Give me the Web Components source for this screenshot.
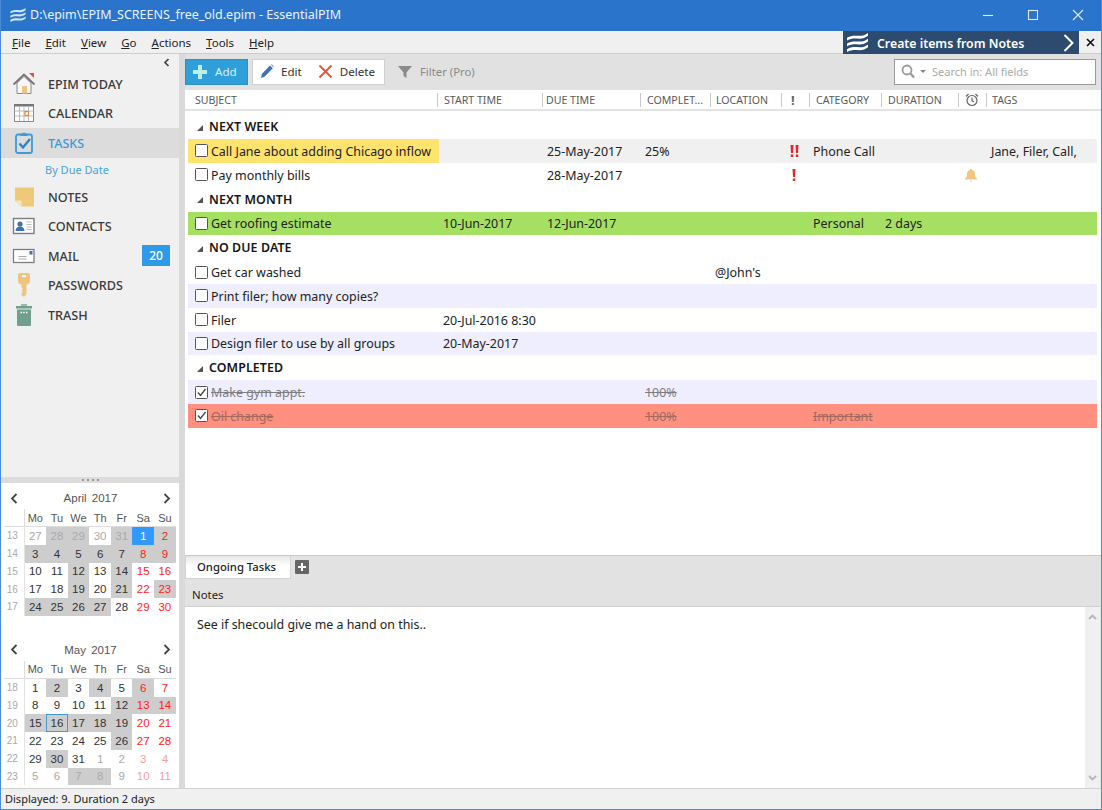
<!DOCTYPE html>
<html>
<head>
<meta charset="utf-8">
<title>EssentialPIM</title>
<style>
  html, body { margin: 0; padding: 0; height: 100%; overflow: hidden; }
  body { font-family: "Noto Sans", "Open Sans", sans-serif; font-size: 12px; color: #222; }
</style>
</head>
<body>
<epim-app></epim-app>
<script>
const WAVES = `<path d="M2 6c5-3 9-2 13-2s6-1 9-3v3c-3 2-5 3-9 3s-8-1-13 2zM2 12c5-3 9-2 13-2s6-1 9-3v3c-3 2-5 3-9 3s-8-1-13 2zM2 18c5-3 9-2 13-2s6-1 9-3v3c-3 2-5 3-9 3s-8-1-13 2z"/>`;

class TitleBar extends HTMLElement {
  constructor() { super(); this.attachShadow({ mode: 'open' }); }
  connectedCallback() {
    this.shadowRoot.innerHTML = `
      <style>
        :host { display: flex; align-items: center; height: 31px; padding-bottom: 2px; box-sizing: border-box; background: #2a75cb; color: #fff; font-size: 12.5px; }
        .logo { margin: 0 3px 0 8px; width: 18px; height: 18px; fill: #cfe3f8; }
        .title { flex: 1; color: #eaf2fb; }
        .btn { width: 45px; height: 29px; display: flex; align-items: center; justify-content: center; }
        svg.c { width: 12px; height: 12px; fill: none; stroke: #dfeafa; stroke-width: 1.1; }
      </style>
      <svg class="logo" viewBox="0 0 26 22">${WAVES}</svg>
      <div class="title">D:\\epim\\EPIM_SCREENS_free_old.epim - EssentialPIM</div>
      <div class="btn"><svg class="c" viewBox="0 0 12 12"><path d="M1 6.5h10"/></svg></div>
      <div class="btn"><svg class="c" viewBox="0 0 12 12"><rect x="1.5" y="1.5" width="9" height="9"/></svg></div>
      <div class="btn" style="margin-right:1px"><svg class="c" viewBox="0 0 12 12"><path d="M1 1l10 10M11 1L1 11"/></svg></div>`;
  }
}
customElements.define('title-bar', TitleBar);

class MenuBar extends HTMLElement {
  constructor() { super(); this.attachShadow({ mode: 'open' }); }
  connectedCallback() {
    const items = ['File', 'Edit', 'View', 'Go', 'Actions', 'Tools', 'Help'];
    this.shadowRoot.innerHTML = `
      <style>
        :host { display: flex; align-items: stretch; height: 23px; background: #f0f0f0; border-bottom: 1px solid #cdcdcd; box-sizing: border-box; font-size: 11.5px; color: #222; }
        ul { flex: 1; display: flex; gap: 15px; align-items: center; list-style: none; margin: 0; padding: 1px 0 0 11px; }
        u { text-underline-offset: 1px; }
        .banner { width: 236px; height: 23px; background: #2d4b6f; color: #fff; font-weight: 600; font-size: 12.3px; display: flex; align-items: center; box-sizing: border-box; padding: 0 5px 0 2px; }
        .banner span { flex: 1; margin-left: 7px; padding-top: 1px; }
        .banner svg { fill: #fff; width: 25px; height: 21px; }
        .banner svg.ch { fill: none; stroke: #fff; stroke-width: 2; width: 11px; height: 18px; }
        .x { width: 22px; display: flex; align-items: center; justify-content: center; }
        .x svg { width: 9px; height: 9px; stroke: #111; stroke-width: 1.6; fill: none; }
      </style>
      <ul>${items.map(m => `<li><u>${m[0]}</u>${m.slice(1)}</li>`).join('')}</ul>
      <div class="banner">
        <svg viewBox="0 0 26 22">${WAVES}</svg><span>Create items from Notes</span>
        <svg class="ch" viewBox="0 0 11 18"><path d="M1.5 1l8 8-8 8"/></svg>
      </div>
      <div class="x"><svg viewBox="0 0 9 9"><path d="M1 1l7 7M8 1L1 8"/></svg></div>`;
  }
}
customElements.define('menu-bar', MenuBar);

class NavItem extends HTMLElement {
  constructor() { super(); this.attachShadow({ mode: 'open' }); }
  connectedCallback() {
    const badge = this.getAttribute('badge');
    this.shadowRoot.innerHTML = `
      <style>
        :host { display: flex; align-items: center; height: 29.6px; padding-left: 10px; font-size: 12.6px; color: #3a3a3a; font-weight: 500; }
        :host([active]) { background: #dcdcdc; color: #3d9ad9; }
        .ic { width: 25px; height: 26px; display: flex; align-items: center; justify-content: center; margin-right: 12px; }
        .label { flex: 1; padding-top: 1px; }
        .badge { width: 28px; height: 21px; margin-right: 9px; background: #2f9be6; color: #fff; font-size: 12px; display: flex; align-items: center; justify-content: center; }
      </style>
      <div class="ic"><slot></slot></div>
      <div class="label">${this.getAttribute('label')}</div>
      ${badge ? `<div class="badge">${badge}</div>` : ''}`;
  }
}
customElements.define('nav-item', NavItem);

class MiniCalendar extends HTMLElement {
  constructor() { super(); this.attachShadow({ mode: 'open' }); }
  connectedCallback() {
    const first = +this.getAttribute('first');
    const prevLen = +this.getAttribute('prev-len');
    const len = +this.getAttribute('len');
    const rows = +this.getAttribute('rows');
    const week = +this.getAttribute('week');
    const busy = this.getAttribute('busy').split(',').map(Number);
    const sel = +this.getAttribute('selected');
    const today = +this.getAttribute('today');
    let cells = '';
    for (let i = 0; i < rows * 7; i++) {
      if (i % 7 === 0) cells += `<div class="wk">${week + i / 7}</div>`;
      let d = i - first + 1, out = false;
      if (d < 1) { d += prevLen; out = true; } else if (d > len) { d -= len; out = true; }
      const cls = [];
      if (out) cls.push('out');
      if (i % 7 >= 5) cls.push('we');
      if (busy.includes(i)) cls.push('busy');
      if (!out && d === sel) cls.push('sel');
      if (!out && d === today) cls.push('today');
      cells += `<div class="d ${cls.join(' ')}">${d}</div>`;
    }
    this.shadowRoot.innerHTML = `
      <style>
        :host { display: block; font-family: "Liberation Sans", Arial, sans-serif; font-size: 11px; color: #333; padding: 0 0 0 3px; width: 173px; }
        .head { height: 26px; display: flex; align-items: center; justify-content: space-between; padding: 4px 6px 0 6px; box-sizing: border-box; color: #555; font-size: 11.5px; word-spacing: 2px; }
        .head svg { width: 8px; height: 11px; fill: none; stroke: #444; stroke-width: 1.8; }
        .grid { display: grid; grid-template-columns: 20.5px repeat(7, 21.6px); grid-auto-rows: 17.75px; }
        .hd { height: 17px; display: flex; align-items: center; justify-content: center; color: #555; border-bottom: 1px solid #ddd; }
        .hd.blank { border-right: 1px solid #ddd; }
        .wk { display: flex; align-items: center; justify-content: center; color: #aaa; font-size: 10px; border-right: 1px solid #e3e3e3; padding-right: 3px; box-sizing: border-box; }
        .d { display: flex; align-items: center; justify-content: center; color: #333; box-sizing: border-box; font-size: 11.5px; }
        .we { color: #f22; }
        .out { color: #aaa; }
        .out.we { color: #f5a0a0; }
        .busy { background: #cdcdcd; }
        .sel { background: #3399ff; color: #fff; }
        .today { border: 1px solid #3b9bdc; }
      </style>
      <div class="head">
        <svg viewBox="0 0 8 11"><path d="M6.5 1L2 5.5 6.5 10"/></svg>
        <span>${this.getAttribute('title')}</span>
        <svg viewBox="0 0 8 11"><path d="M1.5 1L6 5.5 1.5 10"/></svg>
      </div>
      <div class="grid" style="grid-template-rows: 18px">
        <div class="hd blank"></div>
        ${['Mo','Tu','We','Th','Fr','Sa','Su'].map(h => `<div class="hd">${h}</div>`).join('')}
        ${cells}
      </div>`;
  }
}
customElements.define('mini-calendar', MiniCalendar);

class SidePanel extends HTMLElement {
  constructor() { super(); this.attachShadow({ mode: 'open' }); }
  connectedCallback() {
    this.shadowRoot.innerHTML = `
      <style>
        :host { display: flex; flex-direction: column; width: 178px; background: #f0f0f0; min-height: 0; }
        .collapse { height: 15px; box-sizing: border-box; display: flex; justify-content: flex-end; padding: 4px 9px 0 0; }
        .collapse svg { width: 7px; height: 9px; fill: none; stroke: #444; stroke-width: 1.7; }
        nav { flex: none; height: 423px; }
        .sub { height: 24px; display: flex; align-items: center; padding: 0 0 1px 44px; color: #47a3dd; font-size: 11px; box-sizing: border-box; }
        .split { height: 6px; background: #dcdcdc; display: flex; align-items: center; justify-content: center; gap: 3px; }
        .split i { width: 2px; height: 2px; background: #999; }
        .cals { flex: 1; background: #fff; display: flex; flex-direction: column; gap: 19px; }
        svg.i { display: block; }
      </style>
      <nav>
        <div class="collapse"><svg viewBox="0 0 7 9"><path d="M5.5 1L2 4.5 5.5 8"/></svg></div>
        <nav-item label="EPIM TODAY">
          <svg class="i" width="24" height="24" viewBox="0 0 24 24"><path d="M5 11v10.500h14V11L12 4.500z" fill="#f7f7f7" stroke="#8a8a8a"/><path d="M1.500 12.500L12 2.500l10.500 10" fill="none" stroke="#777" stroke-width="1.800"/><rect x="10" y="14" width="5" height="7.500" fill="#eec57c"/><path d="M17 1h5v5z" fill="#e0523a"/></svg>
        </nav-item>
        <nav-item label="CALENDAR">
          <svg class="i" width="22" height="22" viewBox="0 0 22 22"><rect x="1.500" y="2.500" width="19" height="17" fill="#fff" stroke="#888"/><rect x="1" y="2" width="20" height="2.500" fill="#777"/><path d="M1.500 9h19M1.500 14h19M6.500 4v15M11 4v15M15.500 4v15" stroke="#bbb" fill="none"/><rect x="12" y="9.500" width="3.500" height="4" fill="#fff" stroke="#e8893a" stroke-width="1.200"/></svg>
        </nav-item>
        <nav-item label="TASKS" active>
          <svg class="i" width="22" height="24" viewBox="0 0 22 24"><rect x="3" y="3.500" width="16" height="18.500" rx="2" fill="none" stroke="#3d9ad9" stroke-width="1.800"/><path d="M7.500 5V2.500h2.500a1 1 0 0 1 2 0h2.500V5z" fill="#3d9ad9"/><path d="M6.500 12.500l3.500 4 7-8.500" fill="none" stroke="#2a86c8" stroke-width="2.400"/></svg>
        </nav-item>
        <div class="sub">By Due Date</div>
        <nav-item label="NOTES">
          <svg class="i" width="22" height="22" viewBox="0 0 22 22"><path d="M2 1.500h19v19H8l-6-6z" fill="#efc87a"/><path d="M2.500 14.500H8.500v6z" fill="#f9e6bc"/></svg>
        </nav-item>
        <nav-item label="CONTACTS">
          <svg class="i" width="23" height="20" viewBox="0 0 23 20"><rect x="1.500" y="2.500" width="20.500" height="15" fill="#fff" stroke="#7d7d7d" stroke-width="1.400"/><circle cx="8" cy="8" r="2.600" fill="#3d72b0"/><path d="M3.500 15c0-3 2-4.500 4.500-4.500s4.500 1.500 4.500 4.500z" fill="#3d72b0"/><path d="M14.500 6h5M14.500 8.500h5M14.500 11h5M14.500 13.500h5" stroke="#bbb" fill="none"/></svg>
        </nav-item>
        <nav-item label="MAIL" badge="20">
          <svg class="i" width="23" height="16" viewBox="0 0 23 16"><rect x="1.500" y="1.500" width="20.500" height="13" fill="#fff" stroke="#7d7d7d" stroke-width="1.300"/><rect x="17.500" y="3" width="3" height="3.500" fill="#3d72b0"/><path d="M6.500 8.500h8M6.500 11h8" stroke="#aaa" fill="none"/></svg>
        </nav-item>
        <nav-item label="PASSWORDS">
          <svg class="i" width="14" height="26" viewBox="0 0 14 26"><path d="M3 1h8a2 2 0 0 1 2 2v6a4 4 0 0 1-3.500 3.500V22l-2.500 3-2.500-2v-2l1.500-1-1.500-1.500 1.500-1.500-1.500-1.500v-3A4 4 0 0 1 1 9V3a2 2 0 0 1 2-2z" fill="#eec57c"/><rect x="5" y="3.500" width="4" height="1.500" fill="#fff"/></svg>
        </nav-item>
        <nav-item label="TRASH">
          <svg class="i" width="18" height="24" viewBox="0 0 18 24"><rect x="1" y="3" width="16" height="2.500" fill="#6f9f8d"/><rect x="6" y="1" width="6" height="2" fill="#9bb9ad"/><path d="M2 6.500h14v15.500a1 1 0 0 1-1 1H3a1 1 0 0 1-1-1z" fill="#6f9f8d"/><path d="M5.500 9.500h1.500M8.200 9.500h1.500M11 9.500h1.500" stroke="#fff" stroke-width="1.300"/></svg>
        </nav-item>
      </nav>
      <div class="split"><i></i><i></i><i></i><i></i></div>
      <div class="cals">
        <mini-calendar title="April 2017" first="5" prev-len="31" len="30" rows="5" week="13" selected="1"
          busy="1,2,4,6,7,8,9,10,11,12,13,16,18,23,25,27,28,29,30,31"></mini-calendar>
        <mini-calendar title="May 2017" first="0" prev-len="30" len="31" rows="6" week="18" today="16"
          busy="1,3,5,11,12,13,14,15,16,17,18,25,29,37,38"></mini-calendar>
      </div>`;
  }
}
customElements.define('side-panel', SidePanel);

class TaskToolbar extends HTMLElement {
  constructor() { super(); this.attachShadow({ mode: 'open' }); }
  connectedCallback() {
    this.shadowRoot.innerHTML = `
      <style>
        :host { display: flex; align-items: center; height: 36px; padding: 0 5px 1px 0; background: #e1e1e1; font-size: 11.6px; box-sizing: border-box; }
        .add { width: 63px; height: 26px; box-sizing: border-box; background: #2e9fd9; border: 1px solid #2a90c6; color: #d7f0fa; display: flex; align-items: center; gap: 8px; padding-left: 7px; }
        .group { margin-left: 4px; width: 133px; height: 26px; box-sizing: border-box; background: #fff; border: 1px solid #d0d0d0; display: flex; align-items: center; padding-left: 7px; color: #333; }
        .group svg { margin-right: 7px; }
        .group span + svg { margin-left: 16px; }
        .filter { margin-left: 13px; display: flex; align-items: center; gap: 8px; color: #888; flex: 1; font-size: 11.3px; }
        .search { width: 202px; height: 26px; box-sizing: border-box; background: #fff; border: 1px solid #9a9a9a; display: flex; align-items: center; padding-left: 6px; color: #aaa; font-size: 11px; }
        .caret { width: 0; height: 0; border: 3px solid transparent; border-top: 3px solid #888; margin: 3px 6px 0 5px; }
      </style>
      <div class="add">
        <svg width="14" height="14" viewBox="0 0 14 14"><path d="M5 0h4v5h5v4H9v5H5V9H0V5h5z" fill="#bdf0e4"/></svg><span>Add</span>
      </div>
      <div class="group">
        <svg width="14" height="15" viewBox="0 0 14 15"><path d="M1 14l.8-4L10 1.500 12.800 4.300 4.500 12.800z" fill="#3a74b5"/><path d="M10.800.8l1-.5 2 2-.5 1z" fill="#6f9fd6"/></svg><span>Edit</span>
        <svg width="15" height="15" viewBox="0 0 15 15"><path d="M1.500 1.500l12 12M13.500 1.500l-12 12" stroke="#e4593a" stroke-width="2" fill="none"/></svg><span>Delete</span>
      </div>
      <div class="filter">
        <svg width="14" height="14" viewBox="0 0 14 14"><path d="M0 1h14L8.500 7.500V13L5.500 11V7.500z" fill="#8a8a8a"/></svg><span>Filter (Pro)</span>
      </div>
      <div class="search">
        <svg width="14" height="15" viewBox="0 0 14 15"><circle cx="6" cy="6" r="4.500" fill="none" stroke="#9a9a9a" stroke-width="1.800"/><path d="M9.500 9.500l3.500 4" stroke="#9a9a9a" stroke-width="2.200"/></svg>
        <span class="caret"></span><span>Search in: All fields</span>
      </div>`;
  }
}
customElements.define('task-toolbar', TaskToolbar);

class TaskHeader extends HTMLElement {
  constructor() { super(); this.attachShadow({ mode: 'open' }); }
  connectedCallback() {
    const cols = [['SUBJECT', 252, 10], ['START TIME', 105, 6], ['DUE TIME', 98, 3], ['COMPLET...', 70, 6], ['LOCATION', 71, 5], ['!', 28, 0], ['CATEGORY', 72, 6], ['DURATION', 77, 6], ['', 28, 0], ['TAGS', 111, 5]];
    this.shadowRoot.innerHTML = `
      <style>
        :host { display: flex; height: 21px; padding-top: 1px; background: #fff; border-bottom: 2px solid #e3e3e3; box-sizing: border-box; font-size: 10.6px; color: #5a5a5a; }
        .c { display: flex; align-items: center; position: relative; box-sizing: border-box; white-space: nowrap; }
        .c + .c::before { content: ''; width: 1px; height: 14px; background: #c8c8c8; margin-right: var(--pad); flex: none; }
        .bang { font-weight: 700; font-size: 13px; color: #666; margin-left: 9px; }
        svg { margin-left: 6px; }
      </style>
      ${cols.map(([t, w, p], i) => {
        let inner = `<span style="${i === 0 ? 'padding-left:' + p + 'px' : ''}">${t}</span>`;
        if (t === '!') inner = `<span class="bang">!</span>`;
        if (t === '') inner = `<svg width="14" height="14" viewBox="0 0 14 14"><circle cx="7" cy="7.500" r="5" fill="none" stroke="#666" stroke-width="1.200"/><path d="M7 4.500v3.200l2 1.300M1 3.500L3.500 1M13 3.500L10.500 1" stroke="#666" stroke-width="1.200" fill="none"/></svg>`;
        return `<div class="c" style="width:${w}px;--pad:${p}px">${inner}</div>`;
      }).join('')}`;
  }
}
customElements.define('task-header', TaskHeader);

class TaskGroup extends HTMLElement {
  constructor() { super(); this.attachShadow({ mode: 'open' }); }
  connectedCallback() {
    this.shadowRoot.innerHTML = `
      <style>
        :host { display: flex; align-items: center; height: 25px; box-sizing: border-box; padding: 0 0 0 12px; font-size: 12.4px; font-weight: 600; color: #151515; letter-spacing: .1px; }
        i { width: 0; height: 0; border-style: solid; border-width: 0 0 6px 6px; border-color: transparent transparent #555 transparent; margin: 2px 6px 0 0; }
      </style>
      <i></i><slot></slot>`;
  }
}
customElements.define('task-group', TaskGroup);

class TaskRow extends HTMLElement {
  constructor() { super(); this.attachShadow({ mode: 'open' }); }
  connectedCallback() {
    const a = n => this.getAttribute(n) || '';
    const done = this.hasAttribute('done');
    const prio = +a('prio');
    const bangs = Array.from({ length: prio }, () => `<svg width="4" height="12" viewBox="0 0 4 12"><path d="M.5 0h3l-.5 8H1z" fill="#e8242a"/><rect x=".8" y="9.500" width="2.400" height="2.500" fill="#e8242a"/></svg>`).join('');
    const bell = `<svg width="14" height="14" viewBox="0 0 14 14"><path d="M7 1a1 1 0 0 1 1 1c2.500.5 3 2.500 3 4.500 0 2 .5 3 2 4v1H1v-1c1.500-1 2-2 2-4 0-2 .5-4 3-4.500a1 1 0 0 1 1-1z" fill="#f0c57e"/><path d="M5.500 12.700h3L7 14z" fill="#f0c57e"/></svg>`;
    this.shadowRoot.innerHTML = `
      <style>
        :host { display: grid; height: 23.75px; margin: 0 4px 0 3px; font-size: 12.45px; color: #222;
          grid-template-columns: 251px 104px 98px 70px 71px 28px 72px 76px 29px 110px; background: var(--row, transparent); }
        :host([tone=grey]) { --row: #f0f0f0; }
        :host([tone=lilac]) { --row: #eeeefe; }
        :host([tone=green]) { --row: #a6e063; }
        :host([tone=red]) { --row: #ff9080; }
        .c { display: flex; align-items: center; padding-left: 4px; padding-top: 1px; box-sizing: border-box; white-space: nowrap; overflow: hidden; min-width: 0; }
        .s { padding-left: 7px; gap: 3px; }
        .hl { background: #ffe36f; }
        .box { width: 13px; height: 13px; flex: none; margin-top: -1px; }
        .p { justify-content: center; gap: 1px; padding: 0 4px 0 0; }
        .a { justify-content: center; padding: 0 4px 0 0; }
        .done { text-decoration: line-through; color: #7d7d7d; }
        :host([tone=red]) .done { color: #a06a5e; }
      </style>
      <div class="c s ${a('hl') ? 'hl' : ''}">
        <svg class="box" viewBox="0 0 13 13"><rect x=".5" y=".5" width="12" height="12" rx="1" fill="#fff" stroke="#555"/>${done ? '<path d="M3 6.500l2.500 3L10.500 3" fill="none" stroke="#444" stroke-width="1.300"/>' : ''}</svg>
        <span class="${done ? 'done' : ''}"><slot></slot></span>
      </div>
      <div class="c">${a('start')}</div>
      <div class="c">${a('due')}</div>
      <div class="c"><span class="${done ? 'done' : ''}">${a('pct')}</span></div>
      <div class="c">${a('loc')}</div>
      <div class="c p">${bangs}</div>
      <div class="c" style="padding-left:3px"><span class="${done ? 'done' : ''}">${a('cat')}</span></div>
      <div class="c" style="padding-left:3px">${a('dur')}</div>
      <div class="c a">${this.hasAttribute('alarm') ? bell : ''}</div>
      <div class="c">${a('tags')}</div>`;
  }
}
customElements.define('task-row', TaskRow);

class NotesPane extends HTMLElement {
  constructor() { super(); this.attachShadow({ mode: 'open' }); }
  connectedCallback() {
    this.shadowRoot.innerHTML = `
      <style>
        :host { display: flex; flex-direction: column; background: #e2e2e2; height: 233px; box-sizing: border-box; border-top: 1px solid #c8c8c8; }
        .tabs { height: 24px; flex: none; display: flex; align-items: flex-start; }
        .tab { width: 106px; height: 23px; box-sizing: border-box; border: 1px solid #d4d4d4; border-top: 0; background: linear-gradient(#e6e6e6, #fff 45%); display: flex; align-items: center; justify-content: center; font-size: 11.3px; font-weight: 500; color: #222; padding: 0 3px 1px 0; }
        .plus { width: 14px; height: 14px; background: #666; margin: 4px 0 0 4px; border-radius: 1px; display: flex; align-items: center; justify-content: center; }
        .lab { height: 26px; flex: none; display: flex; align-items: center; box-sizing: border-box; padding: 3px 0 0 7px; font-size: 11.4px; color: #222; }
        .body { flex: 1; display: flex; background: #fff; border-top: 1px solid #cfcfcf; margin-right: 1px; min-height: 0; }
        .txt { flex: 1; padding: 9px 0 0 12px; font-size: 12.4px; color: #222; }
        .bar { width: 15px; background: #f0f0f0; display: flex; flex-direction: column; justify-content: space-between; align-items: center; padding: 7px 0 7px; box-sizing: border-box; }
        .bar svg { width: 9px; height: 6px; fill: none; stroke: #b5b5b5; stroke-width: 1.800; }
      </style>
      <div class="tabs">
        <div class="tab">Ongoing Tasks</div>
        <div class="plus"><svg width="10" height="10" viewBox="0 0 10 10"><path d="M5 1v8M1 5h8" stroke="#fff" stroke-width="2"/></svg></div>
      </div>
      <div class="lab">Notes</div>
      <div class="body">
        <div class="txt">See if shecould give me a hand on this..</div>
        <div class="bar">
          <svg viewBox="0 0 9 6"><path d="M1 5l3.500-3.500L8 5"/></svg>
          <svg viewBox="0 0 9 6"><path d="M1 1l3.500 3.500L8 1"/></svg>
        </div>
      </div>`;
  }
}
customElements.define('notes-pane', NotesPane);

class StatusBar extends HTMLElement {
  constructor() { super(); this.attachShadow({ mode: 'open' }); }
  connectedCallback() {
    this.shadowRoot.innerHTML = `
      <style>
        :host { display: flex; align-items: center; height: 21px; box-sizing: border-box; padding: 0 0 2px 4px; background: #f0f0f0; border-top: 1px solid #d2d2d2; font-size: 11px; color: #222; }
      </style>
      <slot></slot>`;
  }
}
customElements.define('status-bar', StatusBar);

class EpimApp extends HTMLElement {
  constructor() { super(); this.attachShadow({ mode: 'open' }); }
  connectedCallback() {
    this.shadowRoot.innerHTML = `
      <style>
        :host { display: flex; flex-direction: column; width: 1102px; height: 810px; box-sizing: border-box; border: 1px solid #4a8cd8; border-top: 0; background: #f0f0f0; overflow: hidden; }
        .main { flex: 1; display: flex; min-height: 0; }
        .gutter { width: 6px; background: #d9d9d9; flex: none; }
        .content { flex: 1; display: flex; flex-direction: column; min-width: 0; }
        .list { flex: 1; background: #fff; min-height: 0; padding-top: 3px; }
      </style>
      <title-bar></title-bar>
      <menu-bar></menu-bar>
      <div class="main">
        <side-panel></side-panel>
        <div class="gutter"></div>
        <div class="content">
          <task-toolbar></task-toolbar>
          <task-header></task-header>
          <div class="list">
            <task-group>NEXT WEEK</task-group>
            <task-row tone="grey" hl="1" due="25-May-2017" pct="25%" prio="2" cat="Phone Call" tags="Jane, Filer, Call,">Call Jane about adding Chicago inflow</task-row>
            <task-row due="28-May-2017" prio="1" alarm>Pay monthly bills</task-row>
            <task-group>NEXT MONTH</task-group>
            <task-row tone="green" start="10-Jun-2017" due="12-Jun-2017" cat="Personal" dur="2 days">Get roofing estimate</task-row>
            <task-group>NO DUE DATE</task-group>
            <task-row loc="@John's">Get car washed</task-row>
            <task-row tone="lilac">Print filer; how many copies?</task-row>
            <task-row start="20-Jul-2016 8:30">Filer</task-row>
            <task-row tone="lilac" start="20-May-2017">Design filer to use by all groups</task-row>
            <task-group>COMPLETED</task-group>
            <task-row tone="lilac" done pct="100%">Make gym appt.</task-row>
            <task-row tone="red" done pct="100%" cat="Important">Oil change</task-row>
          </div>
          <notes-pane></notes-pane>
        </div>
      </div>
      <status-bar>Displayed: 9. Duration 2 days</status-bar>`;
  }
}
customElements.define('epim-app', EpimApp);
</script>
</body>
</html>
